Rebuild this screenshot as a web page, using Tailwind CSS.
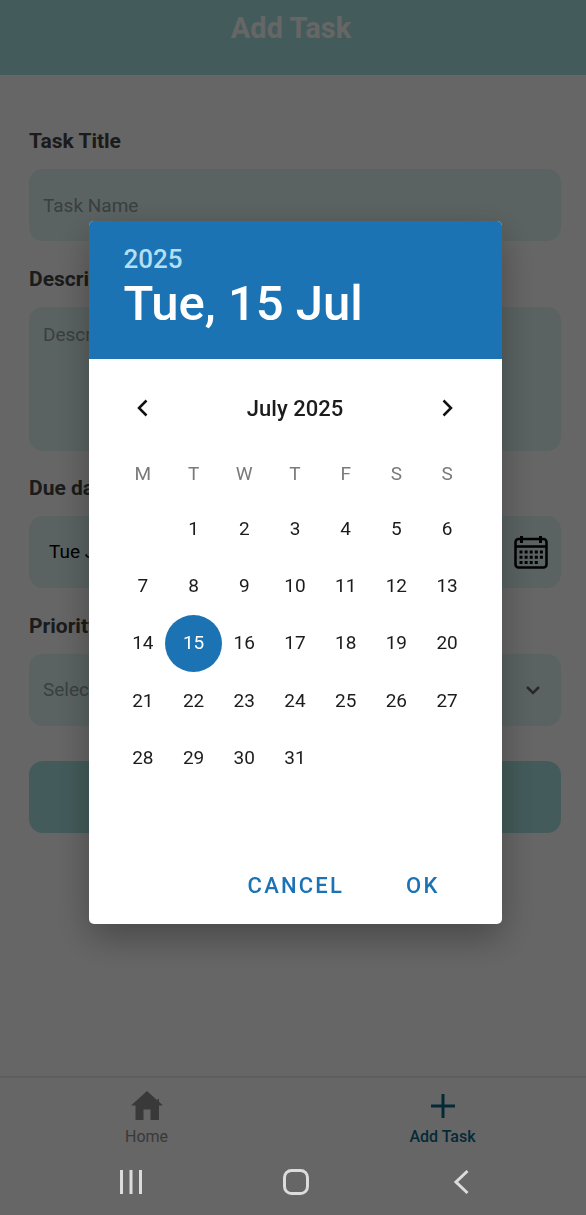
<!DOCTYPE html>
<html lang="en">
<head>
<meta charset="utf-8">
<meta name="viewport" content="width=device-width, initial-scale=1">
<title>Add Task</title>
<script src="https://cdn.jsdelivr.net/npm/@tailwindcss/browser@4"></script>
</head>
<body class="bg-white font-[Roboto,sans-serif]">
<div class="flex min-h-screen flex-col">
  <header class="flex h-[75px] justify-center bg-[#a8e4e2] pt-3 pr-1">
    <h1 class="text-[29px] leading-8 font-bold text-white">Add Task</h1>
  </header>

  <main class="grow pt-[54px] pr-[25px] pl-[29px]">
    <form class="flex flex-col text-[19px]">
      <label for="title" class="mb-4 text-[21px] leading-6 font-bold text-[#444]">Task Title</label>
      <input id="title" type="text" placeholder="Task Name" class="mb-[26px] h-[72px] w-full rounded-[14px] bg-[#e1f8f5] px-3.5 placeholder:text-[#939d9d]">

      <label for="desc" class="mb-4 text-[21px] leading-6 font-bold text-[#444]">Description</label>
      <textarea id="desc" placeholder="Description" class="mb-[25px] h-36 w-full resize-none rounded-[14px] bg-[#e1f8f5] px-3.5 py-4 leading-6 placeholder:text-[#939d9d]"></textarea>

      <label for="due" class="mb-4 text-[21px] leading-6 font-bold text-[#444]">Due date</label>
      <div class="mb-[26px] flex h-[72px] items-center rounded-[14px] bg-[#e1f8f5] pr-3 pl-5">
        <input id="due" type="text" value="Tue Jul 15 2025" class="min-w-0 grow bg-transparent text-black">
        <button type="button" aria-label="Pick a date">
          <svg class="h-9 w-9" viewBox="0 0 36 36" fill="none" stroke="#000" stroke-width="2.500">
            <rect x="2.500" y="5" width="31" height="28.500" rx="3"/>
            <path d="M2 12.500h32"/>
            <path d="M8.500 2v7M27.500 2v7" stroke-width="3"/>
            <path d="M6.500 18h23.500M6.500 23.200h23.500M6.500 28.400h18.500" stroke-width="3" stroke-dasharray="3 2.100"/>
          </svg>
        </button>
      </div>

      <label for="priority" class="mb-4 text-[21px] leading-6 font-bold text-[#444]">Priority</label>
      <div class="mb-[35px] flex h-[72px] items-center rounded-[14px] bg-[#e1f8f5] pr-5">
        <select id="priority" class="h-full min-w-0 grow appearance-none bg-transparent pl-3.5 text-[#939d9d]">
          <option>Select Priority</option>
        </select>
        <svg class="h-4 w-4" viewBox="0 0 16 16" fill="none" stroke="#666" stroke-width="2.500"><path d="M2 5l6 6 6-6"/></svg>
      </div>

      <button type="submit" class="h-[72px] rounded-[14px] bg-[#a8e4e2] font-bold text-white">Add Task</button>
    </form>
  </main>

  <nav class="grid h-[139px] grid-cols-2 border-t-2 border-[#ececec] text-base leading-5">
    <a href="#home" class="flex flex-col items-center pt-3 text-[#8e8e8f]">
      <svg class="h-8 w-8" viewBox="0 0 32 32" fill="#8e8e8f"><path d="M16 1L0 15.500h4.500V30H12.500V19.500h7V30H28V15.500h4l-4-3.700V9h-1.500v1.500z"/></svg>
      <span class="mt-[5px]">Home</span>
    </a>
    <a href="#add" class="flex flex-col items-center pt-3 pl-1.5 font-medium text-[#0c6a8a]">
      <svg class="h-8 w-8" viewBox="0 0 32 32" fill="none" stroke="#0c6a8a" stroke-width="3"><path d="M4 16h24M16 4v24"/></svg>
      <span class="mt-[5px]">Add Task</span>
    </a>
  </nav>
</div>

<div class="fixed inset-0 flex items-center justify-center bg-black/60 px-4 pb-[70px] pl-5">
  <section role="dialog" aria-label="Choose a date" class="w-full max-w-[413px] overflow-hidden rounded-[5px] bg-white text-[#1c1c1c] shadow-[0_14px_36px_rgba(0,0,0,0.3)]">
    <div class="flex h-[138px] flex-col bg-[#1c73b4] pt-5 pl-[35px] font-medium">
      <button type="button" class="self-start text-[26px] leading-9 text-[#b3dff5]">2025</button>
      <h2 class="text-[49px] leading-[53px] text-white">Tue, 15 Jul</h2>
    </div>
    <div class="flex h-[98px] items-center justify-between px-10">
      <button type="button" aria-label="Previous month" class="p-0.5"><svg class="h-6 w-6" viewBox="0 0 24 24" fill="none" stroke="#111" stroke-width="2.500"><path d="M15.500 4.500L8 12l7.500 7.500"/></svg></button>
      <span class="text-[22px] font-medium">July 2025</span>
      <button type="button" aria-label="Next month" class="p-0.5"><svg class="h-6 w-6" viewBox="0 0 24 24" fill="none" stroke="#111" stroke-width="2.500"><path d="M8.500 4.500l7.500 7.500-7.500 7.500"/></svg></button>
    </div>
    <div class="px-[29px]">
      <table class="h-[330px] w-full table-fixed border-collapse text-center text-[19px] leading-6">
        <thead><tr class="h-[43px] align-top text-[#7a7a7a]"><th class="p-0 pt-[5px] font-normal">M</th><th class="p-0 pt-[5px] font-normal">T</th><th class="p-0 pt-[5px] font-normal">W</th><th class="p-0 pt-[5px] font-normal">T</th><th class="p-0 pt-[5px] font-normal">F</th><th class="p-0 pt-[5px] font-normal">S</th><th class="p-0 pt-[5px] font-normal">S</th></tr></thead>
        <tbody id="days"></tbody>
      </table>
    </div>
    <div class="flex h-[137px] items-end justify-end gap-12 pr-[56px] pb-[22px] text-[22px] font-medium text-[#1c73b4]">
      <button type="button" class="h-8 px-2 leading-8 tracking-widest">CANCEL</button>
      <button type="button" class="h-8 px-1.5 leading-8 tracking-widest">OK</button>
    </div>
  </section>
</div>

<div class="fixed inset-x-0 bottom-0 flex h-[66px] items-center justify-between pr-[111px] pl-[117px]">
  <button type="button" aria-label="Recent apps"><svg class="h-7 w-7" viewBox="0 0 28 28" fill="none" stroke="#dcdcdc" stroke-width="3"><path d="M4.500 2v24M14 2v24M23.500 2v24"/></svg></button>
  <button type="button" aria-label="Home screen"><svg class="h-7 w-7" viewBox="0 0 28 28" fill="none" stroke="#dcdcdc" stroke-width="3"><rect x="2.500" y="2.500" width="23" height="23" rx="7"/></svg></button>
  <button type="button" aria-label="Back"><svg class="h-7 w-7" viewBox="0 0 28 28" fill="none" stroke="#dcdcdc" stroke-width="3"><path d="M20.500 3L9 14l11.500 11"/></svg></button>
</div>

<script>
  // July 2025 begins on a Tuesday; weeks run Monday to Sunday.
  const body = document.getElementById('days');
  for (let week = 0; week < 5; week++) {
    const row = body.insertRow();
    for (let d = 0; d < 7; d++) {
      const day = week * 7 + d;
      const cell = row.insertCell();
      cell.className = 'p-0';
      if (day < 1 || day > 31) continue;
      cell.innerHTML = '<div class="flex justify-center"><button type="button" class="h-[57px] w-[57px] shrink-0 rounded-full">' + day + '</button></div>';
      if (day === 15) cell.querySelector('button').className = 'h-[57px] w-[57px] shrink-0 rounded-full bg-[#1c73b4] text-white';
    }
  }
</script>
</body>
</html>
